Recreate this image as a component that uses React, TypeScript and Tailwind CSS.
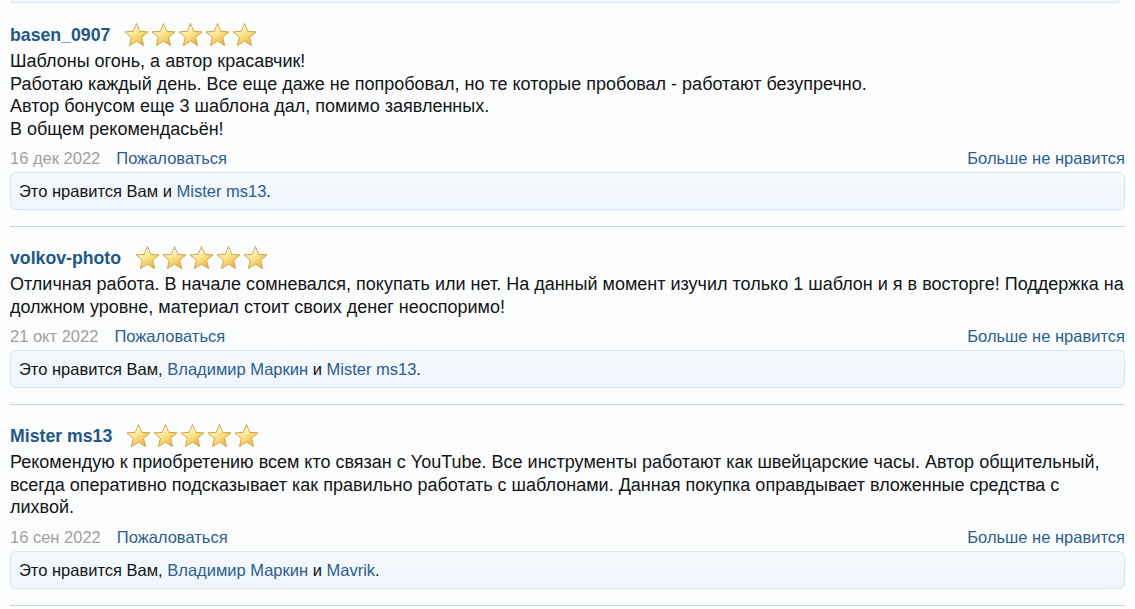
import React from "react";

const Star = ({ id }: { id: string }) => (
  <svg width="27" height="26" viewBox="0 0 27 26" className="block">
    <defs>
      <linearGradient id={id} x1="0.2" y1="0.1" x2="0.8" y2="0.95">
        <stop offset="0" stopColor="#fffbe2" />
        <stop offset="0.45" stopColor="#fbe58a" />
        <stop offset="1" stopColor="#e9b23a" />
      </linearGradient>
    </defs>
    <path
      d="M13.5 1.5 L16.6 9.3 L25 9.9 L18.6 15.3 L20.6 23.6 L13.5 19.1 L6.4 23.6 L8.4 15.3 L2 9.9 L10.4 9.3 Z"
      fill={`url(#${id})`}
      stroke="#d6a23c"
      strokeWidth="1"
      strokeLinejoin="round"
    />
    <path
      d="M13.5 4 L15.8 9.9 M13.5 4 L11.2 9.9"
      stroke="#fffdf0"
      strokeWidth="0.8"
      fill="none"
      opacity="0.7"
    />
  </svg>
);

const Stars = ({ k }: { k: string }) => (
  <div className="flex">
    {[0, 1, 2, 3, 4].map((i) => (
      <Star key={i} id={`g-${k}-${i}`} />
    ))}
  </div>
);

type Review = {
  user: string;
  lines: string[];
  date: string;
  likes: React.ReactNode;
};

const L = ({ children }: { children: React.ReactNode }) => (
  <span className="text-[#2c5d8f]">{children}</span>
);

const reviews: Review[] = [
  {
    user: "basen_0907",
    lines: [
      "Шаблоны огонь, а автор красавчик!",
      "Работаю каждый день. Все еще даже не попробовал, но те которые пробовал - работают безупречно.",
      "Автор бонусом еще 3 шаблона дал, помимо заявленных.",
      "В общем рекомендасьён!",
    ],
    date: "16 дек 2022",
    likes: (
      <>
        Это нравится Вам и <L>Mister ms13</L>.
      </>
    ),
  },
  {
    user: "volkov-photo",
    lines: [
      "Отличная работа. В начале сомневался, покупать или нет. На данный момент изучил только 1 шаблон и я в восторге! Поддержка на должном уровне, материал стоит своих денег неоспоримо!",
    ],
    date: "21 окт 2022",
    likes: (
      <>
        Это нравится Вам, <L>Владимир Маркин</L> и <L>Mister ms13</L>.
      </>
    ),
  },
  {
    user: "Mister ms13",
    lines: [
      "Рекомендую к приобретению всем кто связан с YouTube. Все инструменты работают как швейцарские часы. Автор общительный, всегда оперативно подсказывает как правильно работать с шаблонами. Данная покупка оправдывает вложенные средства с лихвой.",
    ],
    date: "16 сен 2022",
    likes: (
      <>
        Это нравится Вам, <L>Владимир Маркин</L> и <L>Mavrik</L>.
      </>
    ),
  },
];

export default function App() {
  return (
    <div
      className="min-h-[609px] bg-[#fcfdff] px-[10px] text-[16.5px] text-[#141414]"
      style={{ fontFamily: '"Liberation Sans", Arial, sans-serif' }}
    >
      <div className="ml-[1px] mr-[5px] h-[3px] rounded-b-[6px] border border-t-0 border-[#dde7f1] bg-[#f3f8fd]" />
      {reviews.map((r, idx) => (
        <div
          key={idx}
          className={`border-b border-[#c9d1d9] pb-[16px] ${idx === 0 ? "pt-[19px]" : "pt-[18px]"}`}
        >
          <div className="flex h-[28px] items-center">
            <span className="text-[17.7px] font-bold text-[#1f5789] leading-none">
              {r.user}
            </span>
            <div className="ml-[13px] mt-[-2px]">
              <Stars k={String(idx)} />
            </div>
          </div>
          <div className="mr-[-1px] text-[18px] leading-[22.5px]">
            {r.lines.map((l, i) => (
              <div key={i}>{l}</div>
            ))}
          </div>
          <div className="mt-[7px] flex h-[22px] items-center justify-between leading-[22px]">
            <div className="flex items-center">
              <span className="text-[#a0a0a0]">{r.date}</span>
              <span className="ml-[16px] text-[#2c5d8f]">Пожаловаться</span>
            </div>
            <span className="text-[#2c5d8f]">Больше не нравится</span>
          </div>
          <div className="mt-[3px] rounded-[6px] border border-[#dbe5ef] bg-gradient-to-b from-[#f5f9fd] to-[#eef5fc] py-[8px] pl-[8px] leading-[20px]">
            {r.likes}
          </div>
        </div>
      ))}
    </div>
  );
}
